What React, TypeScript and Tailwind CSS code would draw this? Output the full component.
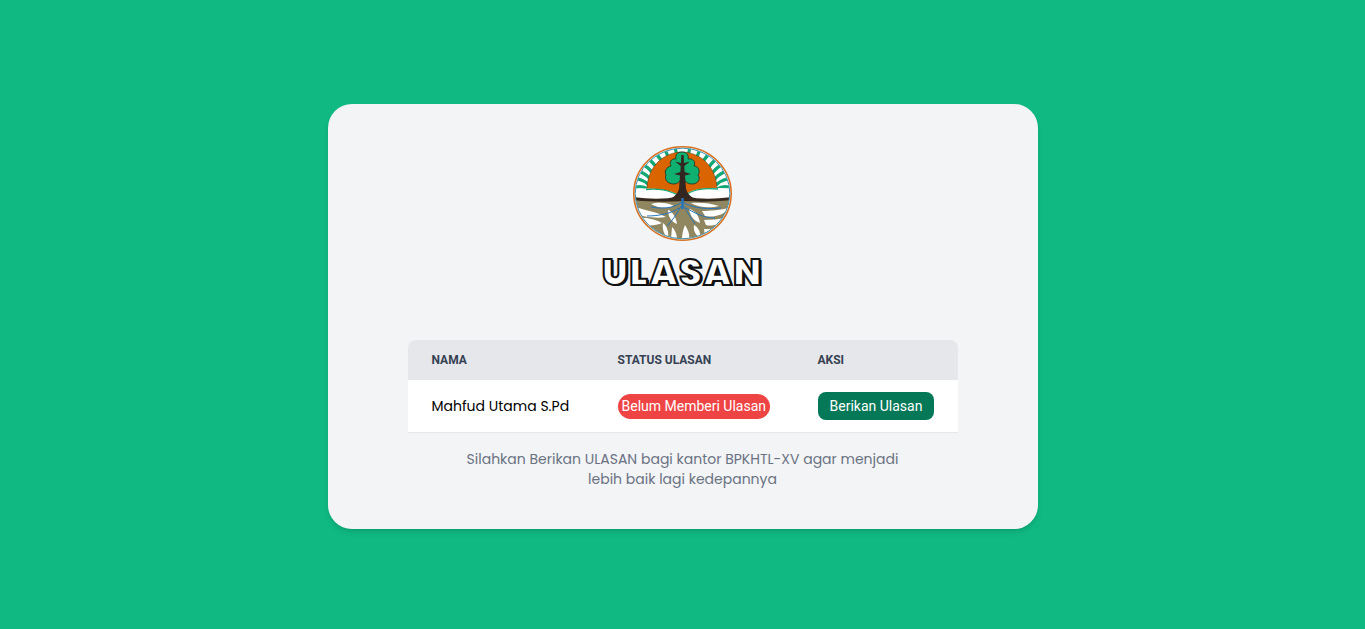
const poppins = "font-['Poppins','Inter','Noto_Sans',sans-serif]";

function Logo() {
  return (
    <svg width="100" height="95" viewBox="0 0 100 95" className="block">
      <defs>
        <clipPath id="disc">
          <ellipse cx="49.5" cy="47.5" rx="47" ry="45" />
        </clipPath>
      </defs>
      <ellipse cx="49.5" cy="47.5" rx="48.7" ry="46.7" fill="#fff" stroke="#d9701f" strokeWidth="1.6" />
      <g clipPath="url(#disc)">
        {/* green rays */}
        <g stroke="#12a876" strokeWidth="3.2" fill="none">
          <path d="M3 41 C8 40 12 41 15 43" />
          <path d="M5 33 C9 34 13 36 16 39" />
          <path d="M8 26 C12 28 16 31 18 34" />
          <path d="M12 20 C16 22 19 26 21 29" />
          <path d="M17 14 C20 17 23 20 25 24" />
          <path d="M24 9 C27 12 29 15 30 19" />
          <path d="M32 4 C34 7 35 11 36 14" />
          <path d="M42 2 C43 4 43 7 44 9" />
          <path d="M57 2 C56 4 56 7 55 9" />
          <path d="M67 4 C65 7 64 11 63 14" />
          <path d="M75 9 C72 12 70 15 69 19" />
          <path d="M82 14 C79 17 76 20 74 24" />
          <path d="M87 20 C83 22 80 26 78 29" />
          <path d="M91 26 C87 28 83 31 81 34" />
          <path d="M94 33 C90 34 86 36 83 39" />
          <path d="M96 41 C91 40 87 41 84 43" />
        </g>
        {/* sun */}
        <path d="M14 46 C13 22 30 6 49 6 C68 6 85 22 84 46 L84 50 L14 50 Z" fill="#d96400" stroke="#4a3a20" strokeWidth="0.5" />
        {/* snow bands */}
        <path d="M2 43 C14 42 27 43 35 45 C40 46 43 47 44.5 49 L44 54 L2 54 Z" fill="#fff" />
        <path d="M98 43 C86 41 66 42 59 45 C56 46 54 47 53.5 49 L54 54 L98 54 Z" fill="#fff" />
        <path d="M13 43.5 C24 42.5 33 44 39 46.5 C42 47.5 44 48.5 45 50" fill="none" stroke="#12a876" strokeWidth="1.3" />
        <path d="M85 43 C74 42 65 43 59 45.5 C56 46.5 54 48 53 50" fill="none" stroke="#12a876" strokeWidth="1.3" />
        {/* ground */}
        <path d="M0 53 H100 V95 H0 Z" fill="#90865f" />
        <path d="M0 51 C14 53 32 54 46 50 L53 50 C66 54 84 53 100 51 V54 C82 56 64 56 50 55 C34 56 16 56 0 54 Z" fill="#37291f" />
        {/* white gaps between roots */}
        <g fill="#fff">
          <path d="M18 58 C24 56 34 56 41 60 C34 63 24 62 18 58 Z" />
          <path d="M3 61 C10 64 22 65 33 71 C22 73 8 70 3 68 Z" />
          <path d="M35 64 C39 65 43 71 44 78 C38 76 35 70 35 64 Z" />
          <path d="M4 72 C12 71 22 73 29 77 C23 80 13 80 8 78 Z" />
          <path d="M30 77 C34 80 36 86 35 92 C31 89 29 83 30 77 Z" />
          <path d="M13 81 C19 82 24 85 27 91 C21 90 16 86 13 81 Z" />
          <path d="M39 81 C42 84 44 88 44 94 L38 93 Z" />
          <path d="M58 57 C66 56 78 57 86 60 C78 62 66 62 58 57 Z" />
          <path d="M56 63 C62 64 66 70 67 77 C61 75 57 70 56 63 Z" />
          <path d="M69 65 C78 65 88 64 95 62 C92 69 80 72 72 70 Z" />
          <path d="M71 74 C78 74 86 73 92 72 C88 78 79 81 73 79 Z" />
          <path d="M61 79 C65 81 68 86 67 92 C63 89 60 85 61 79 Z" />
          <path d="M71 83 C76 83 80 83 84 82 C81 87 76 90 72 90 Z" />
          <path d="M52 79 C55 84 57 88 56 94 L49 94 C49 88 50 84 52 79 Z" />
        </g>
        {/* blue roots */}
        <g stroke="#2574bb" strokeWidth="1" fill="none">
          <path d="M49.5 51 L49.5 63" strokeWidth="2.4" />
          <path d="M49 56 C44 60 34 64 18 61" />
          <path d="M50 56 C55 60 68 64 88 62" />
          <path d="M48 60 C45 66 40 74 34 80" />
          <path d="M51 60 C54 66 58 72 62 78" />
          <path d="M46 62 C38 68 24 70 14 70" />
          <path d="M53 62 C60 66 70 72 82 72" />
        </g>
        {/* tree */}
        <path d="M49 6 C44 6 42 9 43 13 C38 12 36 17 38 20 C33 21 31 26 33 29 C31 34 35 38 41 38 C45 38 47 35 48 33 L51 33 C52 36 55 38 59 38 C65 38 68 33 65 29 C68 25 65 20 61 20 C63 16 60 12 55 13 C56 9 54 6 49 6 Z" fill="#10b070" stroke="#17302a" strokeWidth="0.8" />
        <path d="M48.3 9 H50.7 L51 17 L57 15.5 L51.3 20 L51.6 26 L58 28 L52 29.5 L53 43 C54 47 57 50 60 52 L39 52 C42 50 45 47 46 43 L47 29.5 L41 28 L47.4 26 L47.7 20 L42 15.5 L48 17 Z" fill="#33251f" />
      </g>
      <ellipse cx="49.5" cy="47.5" rx="47.3" ry="45.3" fill="none" stroke="#3a8fb0" strokeWidth="1" />
    </svg>
  );
}

export default function App() {
  return (
    <main className="min-h-screen bg-[#10b981] flex items-start justify-center pt-[104px]">
      <div className="w-[710px] h-[425px] bg-gray-100 rounded-3xl shadow-md px-20 pt-[42px] flex flex-col items-center">
        <Logo />
        <h1 className={`${poppins} mt-3 text-4xl leading-10 font-black tracking-wider text-white [-webkit-text-stroke:2px_#111] [text-shadow:2px_1px_0_#111]`}>
          ULASAN
        </h1>

        <table className="mt-[47px] w-[550px] table-fixed border-collapse">
          <thead>
            <tr className="h-10 bg-gray-200 text-left font-['Roboto',sans-serif] text-xs font-bold uppercase text-gray-700">
              <th className="w-[186px] pl-6 font-bold rounded-tl-lg">Nama</th>
              <th className="w-[200px] pl-6 font-bold">Status Ulasan</th>
              <th className="pl-6 font-bold rounded-tr-lg">Aksi</th>
            </tr>
          </thead>
          <tbody>
            <tr className="h-[52px] bg-white border-b border-gray-200">
              <td className={`${poppins} pl-6 text-sm text-black`}>Mahfud Utama S.Pd</td>
              <td className="pl-6">
                <span className="inline-flex h-[25px] items-center rounded-full bg-[#ef4444] px-1 font-['Roboto',sans-serif] text-sm whitespace-nowrap text-white">
                  Belum Memberi Ulasan
                </span>
              </td>
              <td className="pl-6">
                <button className="h-7 w-[116px] rounded-lg bg-[#047857] pl-px font-['Roboto',sans-serif] text-sm text-white">
                  Berikan Ulasan
                </button>
              </td>
            </tr>
          </tbody>
        </table>

        <p className={`${poppins} mt-4 w-[450px] text-center text-sm leading-5 text-gray-500`}>
          Silahkan Berikan ULASAN bagi kantor BPKHTL-XV agar menjadi lebih baik lagi kedepannya
        </p>
      </div>
    </main>
  );
}
